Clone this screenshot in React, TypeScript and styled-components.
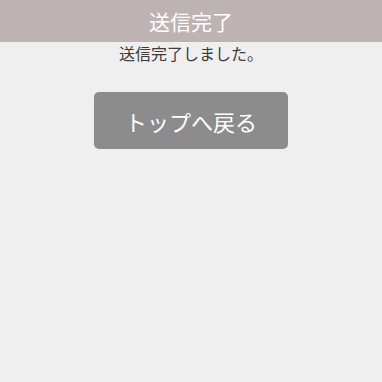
import React from "react";
import styled, { createGlobalStyle } from "styled-components";

const GlobalStyle = createGlobalStyle`
  html, body {
    margin: 0;
    padding: 0;
    background: #efefef;
  }
  body {
    font-family: "Noto Sans CJK JP", "Noto Sans", sans-serif;
  }
`;

const Page = styled.div`
  min-height: 382px;
  background: #efefef;
  display: flex;
  flex-direction: column;
  align-items: center;
`;

const Header = styled.header`
  width: 100%;
  height: 42px;
  background: #bdb3b3;
  display: flex;
  align-items: center;
  justify-content: center;
`;

const Title = styled.h1`
  margin: 0;
  color: #ffffff;
  font-size: 21px;
  font-weight: 400;
  line-height: 1;
`;

const Message = styled.p`
  margin: 0;
  color: #3c3c3c;
  font-size: 16px;
  line-height: 22px;
`;

const BackButton = styled.button`
  margin-top: 28px;
  width: 194px;
  height: 57px;
  border: none;
  border-radius: 5px;
  background: #8c8c8c;
  color: #ffffff;
  font-family: inherit;
  font-size: 22px;
  cursor: pointer;
`;

const App: React.FC = () => {
  return (
    <>
      <GlobalStyle />
      <Page>
        <Header>
          <Title>送信完了</Title>
        </Header>
        <Message>送信完了しました。</Message>
        <BackButton>トップへ戻る</BackButton>
      </Page>
    </>
  );
};

export default App;
